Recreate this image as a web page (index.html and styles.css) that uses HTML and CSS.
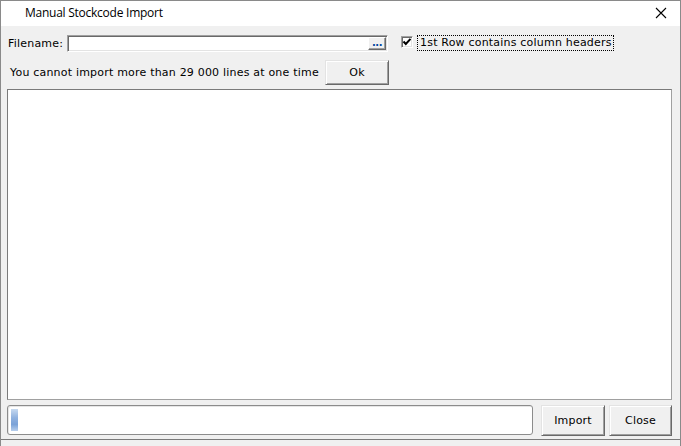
FILE: index.html
```html
<!DOCTYPE html>
<html>
<head>
<meta charset="utf-8">
<link rel="stylesheet" href="styles.css">
</head>
<body>
<div class="window">
  <div class="titlebar">
    <span class="title">Manual Stockcode Import</span>
    <svg class="close-x" width="12" height="12" viewBox="0 0 12 12"><path d="M1 1 L11 11 M11 1 L1 11" stroke="#000" stroke-width="1.1" fill="none"/></svg>
  </div>
  <div class="content">
    <div class="row1">
      <span class="lbl">Filename:</span>
      <div class="filebox"><div class="browse">...</div></div>
      <div class="chk"><svg width="10" height="10" viewBox="0 0 10 10"><path d="M1.5 4.5 L3.8 7 L8.5 1.8" stroke="#000" stroke-width="2" fill="none"/></svg></div>
      <span class="chklbl">1st Row contains column headers</span>
    </div>
    <div class="row2">
      <span class="msg">You cannot import more than 29 000 lines at one time</span>
      <div class="btn okbtn">Ok</div>
    </div>
    <div class="panel"></div>
    <div class="row3">
      <div class="progress"><div class="chunk"></div></div>
      <div class="btn importbtn">Import</div>
      <div class="btn closebtn">Close</div>
    </div>
  </div>
</div>
</body>
</html>
```
FILE: styles.css
```css
* { box-sizing: border-box; }
html, body { margin: 0; padding: 0; background: #f0f0f0; }
body { font-family: "DejaVu Sans", Tahoma, sans-serif; font-size: 11px; color: #000; letter-spacing: 0.2px; }
.window {
  width: 681px; height: 446px;
  border: 1px solid #8a8a8a; border-bottom: none;
  background: #f0f0f0;
  display: flex; flex-direction: column;
  overflow: hidden;
}
.titlebar {
  height: 25px; background: #fff;
  display: flex; align-items: center; justify-content: space-between;
  flex-shrink: 0;
}
.title {
  font-family: "Open Sans", "Noto Sans", sans-serif; font-size: 12px;
  margin-left: 24px; margin-top: -2px; letter-spacing: -0.25px;
}
.close-x { margin-right: 13px; margin-top: -1px; }
.content { display: flex; flex-direction: column; border-bottom: 1px solid #7a7a7a; height: 414px; flex: none; }
.row1 { display: flex; align-items: center; margin: 9px 0 0 7px; height: 17px; }
.lbl { width: 59px; }
.filebox {
  width: 321px; height: 17px; background: #fff;
  border-top: 1px solid #a0a0a0; border-left: 1px solid #a0a0a0;
  border-right: 1px solid #fff; border-bottom: 1px solid #fff;
  box-shadow: inset 1px 1px 0 #696969, inset -1px -1px 0 #e3e3e3;
  display: flex; justify-content: flex-end; align-items: center; padding-right: 1px;
}
.browse {
  width: 18px; height: 13px;
  background: #f0f0f0;
  border-top: 1px solid #fff; border-left: 1px solid #fff;
  border-right: 1px solid #696969; border-bottom: 1px solid #696969;
  box-shadow: inset -1px -1px 0 #a0a0a0;
  color: #0046a0; font-size: 10px; line-height: 9px; text-align: center; font-weight: bold; letter-spacing: -0.5px;
}
.chk {
  width: 12px; height: 12px; margin-left: 13px; margin-top: -4px;
  background: #fff;
  border-top: 1px solid #a0a0a0; border-left: 1px solid #a0a0a0;
  border-right: 1px solid #fff; border-bottom: 1px solid #fff;
  box-shadow: inset 1px 1px 0 #696969, inset -1px -1px 0 #e3e3e3;
  display: flex; align-items: center; justify-content: center;
}
.chklbl {
  margin-left: 4px; margin-top: -1px; padding: 0 1px 0 2px; height: 16px; line-height: 14px;
  border: 1px dotted #000;
}
.row2 { display: flex; align-items: center; margin: 8px 0 0 9px; height: 25px; }
.msg { width: 315px; }
.btn {
  background: #f0f0f0;
  border-top: 1px solid #e3e3e3; border-left: 1px solid #e3e3e3;
  border-right: 1px solid #696969; border-bottom: 1px solid #696969;
  box-shadow: inset 1px 1px 0 #fff, inset -1px -1px 0 #a0a0a0;
  display: flex; align-items: center; justify-content: center;
}
.okbtn { width: 64px; height: 25px; }
.panel {
  margin: 4px 0 0 6px; width: 665px; height: 311px;
  background: #fff; border: 1px solid #7a7a7a; border-right-color: #a0a0a0; border-bottom-color: #a0a0a0;
}
.row3 { display: flex; margin: 5px 0 0 6px; height: 31px; }
.progress {
  width: 526px; height: 30px; background: #fff;
  border: 1px solid #8c8c8c; border-radius: 3px;
  box-shadow: inset 1px 1px 0 #e6e6e6;
  padding: 3px;
}
.chunk { width: 7px; height: 22px; background: linear-gradient(#c6d9f0, #8fb1df 40%, #7aa2d8 70%, #b8cfed); }
.importbtn { width: 64px; height: 31px; margin-left: 8px; }
.closebtn { width: 63px; height: 31px; margin-left: 4px; }
```
